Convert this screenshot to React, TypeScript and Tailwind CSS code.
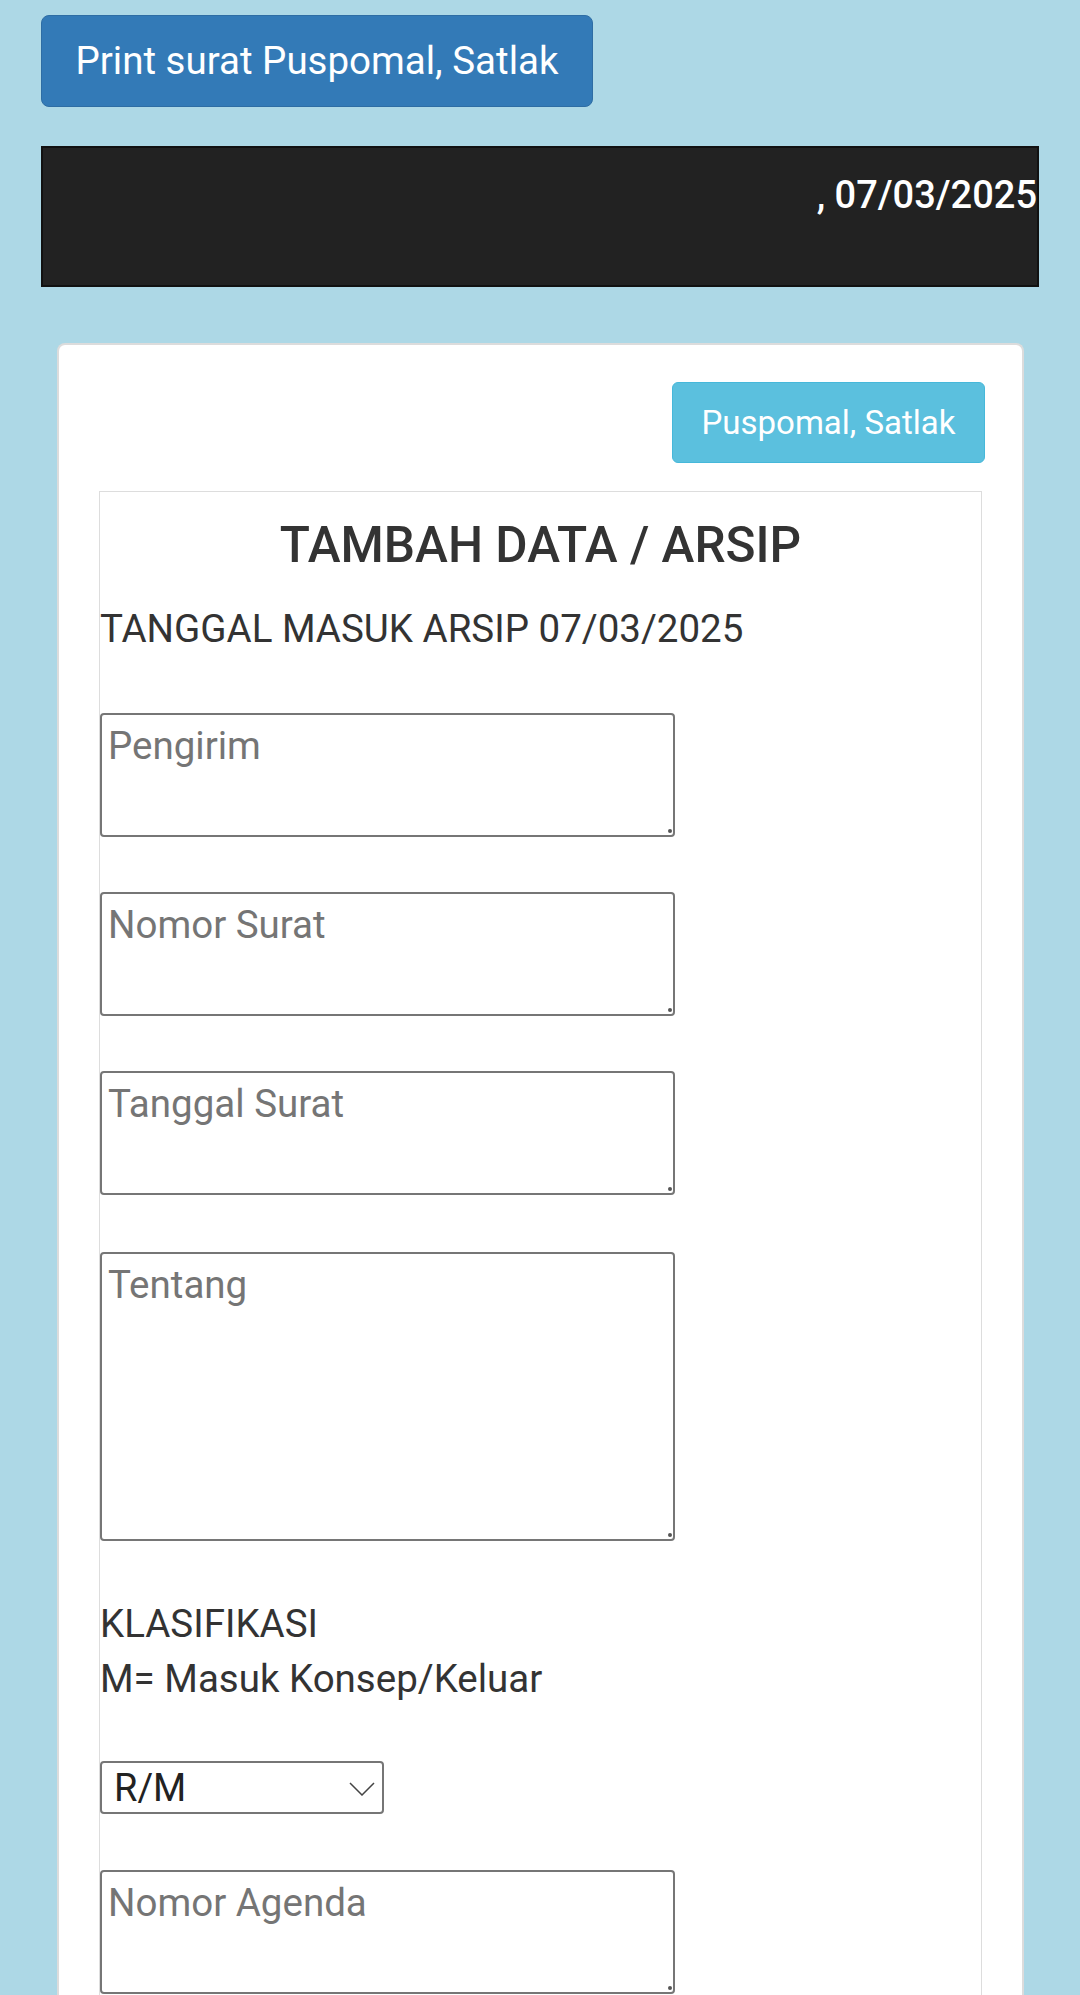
function Field({ placeholder, tall }: { placeholder: string; tall?: boolean }) {
  return (
    <div className="relative w-[575px]">
      <textarea
        placeholder={placeholder}
        className={`block w-full resize-none rounded-[4px] border-2 border-[#767676] bg-white px-[6px] pt-[9px] text-[38.5px] leading-[44px] text-[#222] outline-none placeholder:text-[#757575] ${tall ? "h-[289px]" : "h-[124px]"}`}
      />
      <span className="absolute right-[3px] bottom-[4px] h-[4px] w-[4px] rounded-full bg-[#555]" />
    </div>
  );
}

export default function App() {
  return (
    <div className="min-h-screen overflow-hidden bg-[#add8e6] px-[41px] pt-[15px] font-['Roboto',sans-serif]">
      <button className="h-[92px] w-[552px] rounded-[8px] border border-[#2e6da4] bg-[#337ab7] text-[38.5px] leading-none text-white">
        Print surat Puspomal, Satlak
      </button>

      <div className="mt-[39px] h-[141px] border-2 border-[#111] bg-[#222] pt-[19px] text-right text-[38px] leading-[57px] font-medium text-white">
        , 07/03/2025
      </div>

      <div className="mt-[56px] mr-[15px] ml-[16px] rounded-t-[8px] border-2 border-b-0 border-[#dcdcdc] bg-white pt-[37px] pr-[37px] pl-[40px]">
        <div className="flex justify-end">
          <button className="h-[81px] w-[313px] rounded-[6px] border border-[#46b8da] bg-[#5bc0de] text-[33px] leading-none text-white">
            Puspomal, Satlak
          </button>
        </div>

        <div className="mt-[28px] mr-[3px] border border-b-0 border-[#dddddd] pt-[26px] pb-[20px] text-[#333]">
          <h3 className="text-center text-[49.5px] leading-[55px] font-medium">TAMBAH DATA / ARSIP</h3>
          <p className="mt-[29px] text-[38.5px] leading-[54px]">TANGGAL MASUK ARSIP 07/03/2025</p>

          <div className="mt-[57px] flex flex-col gap-[55px]">
            <Field placeholder="Pengirim" />
            <Field placeholder="Nomor Surat" />
            <Field placeholder="Tanggal Surat" />
          </div>
          <div className="mt-[57px]">
            <Field placeholder="Tentang" tall />
          </div>

          <p className="mt-[55px] text-[38.5px] leading-[55px]">
            KLASIFIKASI
            <br />
            M= Masuk Konsep/Keluar
          </p>

          <div className="relative mt-[55px] w-[284px]">
            <select className="block h-[53px] w-full appearance-none rounded-[4px] border-2 border-[#767676] bg-white pl-[12px] text-[38px] leading-[48px] text-[#222] outline-none">
              <option>R/M</option>
              <option>R</option>
              <option>M</option>
            </select>
            <svg
              className="pointer-events-none absolute top-[21px] right-[9px]"
              width="26"
              height="14"
              viewBox="0 0 26 14"
              fill="none"
            >
              <polyline points="1,1 13,13 25,1" stroke="#444" strokeWidth="1.5" />
            </svg>
          </div>

          <div className="mt-[56px]">
            <Field placeholder="Nomor Agenda" />
          </div>
        </div>
      </div>
    </div>
  );
}
